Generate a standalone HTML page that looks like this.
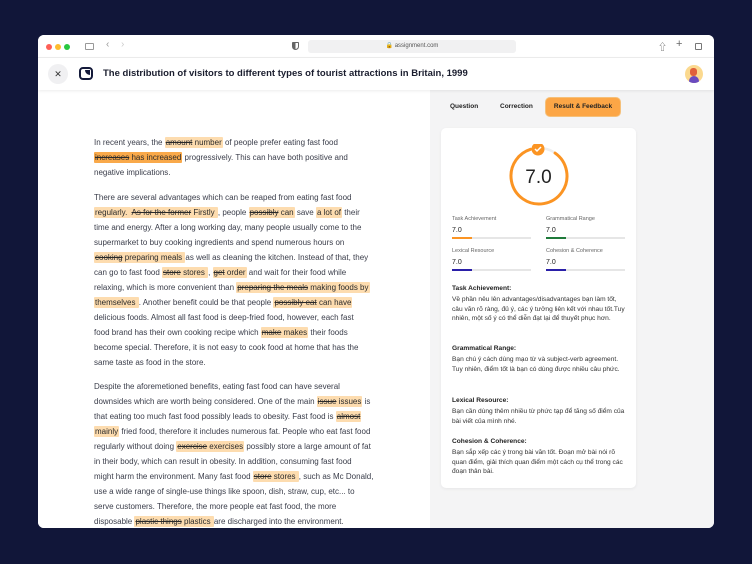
<!DOCTYPE html>
<html><head><meta charset="utf-8"><style>
*{margin:0;padding:0;box-sizing:border-box}
body{width:752px;height:564px;background:#111639;font-family:"Liberation Sans","Noto Sans CJK SC",sans-serif;position:relative;overflow:hidden;color:#2a2d3a}
.win{position:absolute;left:38px;top:35px;width:676px;height:493px;background:#fff;border-radius:6px;overflow:hidden}
.tb{position:absolute;left:0;top:0;width:676px;height:23px;background:#fff;border-bottom:1px solid #eee}
.dot{position:absolute;top:9px;width:6px;height:6px;border-radius:50%}
.hdr{position:absolute;left:0;top:23px;width:676px;height:32px;background:#fff;box-shadow:0 1px 3px rgba(0,0,0,.08);z-index:2}
.left{position:absolute;left:0;top:55px;width:392px;height:438px;background:#fff}
.right{position:absolute;left:392px;top:55px;width:284px;height:438px;background:#f4f4f5}
.ln{position:absolute;left:56px;white-space:nowrap;font-size:8px;color:#3a3d4a;line-height:12px}
.h{background:#fddcaf;padding:1px 1px;border-radius:1px;color:#2a2a2a}
.hd{background:#f9a94a}
s{text-decoration:line-through}
.card{position:absolute;left:11px;top:38px;width:195px;height:360px;background:#fff;border-radius:5px;box-shadow:0 1px 3px rgba(0,0,0,.06)}
.lab{position:absolute;font-size:5.5px;color:#666}
.val{position:absolute;font-size:7px;color:#222}
.bar{position:absolute;width:79px;height:2px;background:#e6e6e6}
.bar i{display:block;height:2px;width:20px}
.fb{position:absolute;left:11px;width:176px;font-size:6.6px;line-height:9.8px;color:#333}
.fb b{display:block;color:#222;margin-bottom:1px}
</style></head><body>
<div class="win">
 <div class="tb">
  <div class="dot" style="left:8px;background:#fe5f57"></div>
  <div class="dot" style="left:17px;background:#febc2e"></div>
  <div class="dot" style="left:26px;background:#28c840"></div>
  <div style="position:absolute;left:47px;top:8px;width:9px;height:7px;border:1px solid #999;border-radius:1px"></div>
  <div style="position:absolute;left:68px;top:4px;font-size:10px;color:#999">&#8249;</div>
  <div style="position:absolute;left:83px;top:4px;font-size:10px;color:#ccc">&#8250;</div>
  <div style="position:absolute;left:254px;top:7px;width:7px;height:8px;border:1px solid #666;border-radius:1px 1px 4px 4px;background:linear-gradient(90deg,#666 50%,#fff 50%)"></div>
  <div style="position:absolute;left:270px;top:5px;width:208px;height:13px;background:#f1f1f2;border-radius:3px;font-size:6px;color:#555;text-align:center;line-height:13px">&#128274; assignment.com</div>
  <div style="position:absolute;left:620px;top:5px;font-size:9px;color:#666">&#8679;</div>
  <div style="position:absolute;left:638px;top:3px;font-size:11px;color:#666">+</div>
  <div style="position:absolute;left:657px;top:8px;width:7px;height:7px;border:1px solid #777;border-radius:1px"></div>
 </div>
 <div class="hdr">
  <div style="position:absolute;left:10px;top:6px;width:20px;height:20px;border-radius:50%;background:#f0f0f2;text-align:center;line-height:20px;font-size:9px;color:#333">&#x2715;</div>
  <div style="position:absolute;left:41px;top:9px;width:14px;height:13px;border:2.5px solid #141a3a;border-radius:4px"></div>
  <div style="position:absolute;left:47px;top:12px;width:5px;height:5px;background:#141a3a;border-radius:0 0 0 5px"></div>
  <div style="position:absolute;left:65px;top:10px;font-size:9.5px;font-weight:bold;color:#1a1d2e">The distribution of visitors to different types of tourist attractions in Britain, 1999</div>
  <div style="position:absolute;left:647px;top:7px;width:18px;height:18px;border-radius:50%;background:#fbd98f;overflow:hidden"><div style="position:absolute;left:4px;top:11px;width:10px;height:8px;border-radius:5px 5px 0 0;background:#6a4bbf"></div><div style="position:absolute;left:5px;top:3px;width:7px;height:8px;border-radius:3px;background:#e0603a"></div></div>
 </div>
 <div class="left">
  <div class="ln" style="top:47px">In recent years, the <span class="h"><s>amount</s> number</span> of people prefer eating fast food</div>
  <div class="ln" style="top:62px"><span class="h hd"><s>increases</s> has increased</span> progressively. This can have both positive and</div>
  <div class="ln" style="top:77px">negative implications.</div>
  <div class="ln" style="top:102px">There are several advantages which can be reaped from eating fast food</div>
  <div class="ln" style="top:117px"><span class="h">regularly. </span> <span class="h"><s>As for the former</s> Firstly </span> , people <span class="h"><s>possibly</s> can</span> save <span class="h">a lot of</span> their</div>
  <div class="ln" style="top:132px">time and energy. After a long working day, many people usually come to the</div>
  <div class="ln" style="top:147px">supermarket to buy cooking ingredients and spend numerous hours on</div>
  <div class="ln" style="top:162px"><span class="h"><s>cooking</s> preparing meals </span> as well as cleaning the kitchen. Instead of that, they</div>
  <div class="ln" style="top:177px">can go to fast food <span class="h"><s>store</s> stores </span>, <span class="h"><s>get</s> order</span> and wait for their food while</div>
  <div class="ln" style="top:192px">relaxing, which is more convenient than <span class="h"><s>preparing the meals</s> making foods by</span></div>
  <div class="ln" style="top:207px"><span class="h">themselves </span> . Another benefit could be that people <span class="h"><s>possibly eat</s> can have</span></div>
  <div class="ln" style="top:222px">delicious foods. Almost all fast food is deep-fried food, however, each fast</div>
  <div class="ln" style="top:237px">food brand has their own cooking recipe which <span class="h"><s>make</s> makes</span> their foods</div>
  <div class="ln" style="top:252px">become special. Therefore, it is not easy to cook food at home that has the</div>
  <div class="ln" style="top:267px">same taste as food in the store.</div>
  <div class="ln" style="top:291px">Despite the aforemetioned benefits, eating fast food can have several</div>
  <div class="ln" style="top:306px">downsides which are worth being considered. One of the main <span class="h"><s>issue</s> issues</span> is</div>
  <div class="ln" style="top:321px">that eating too much fast food possibly leads to obesity. Fast food is <span class="h"><s>almost</s></span></div>
  <div class="ln" style="top:336px"><span class="h">mainly</span> fried food, therefore it includes numerous fat. People who eat fast food</div>
  <div class="ln" style="top:351px">regularly without doing <span class="h"><s>exercise</s> exercises</span> possibly store a large amount of fat</div>
  <div class="ln" style="top:366px">in their body, which can result in obesity. In addition, consuming fast food</div>
  <div class="ln" style="top:381px">might harm the environment. Many fast food <span class="h"><s>store</s> stores </span> , such as Mc Donald,</div>
  <div class="ln" style="top:396px">use a wide range of single-use things like spoon, dish, straw, cup, etc... to</div>
  <div class="ln" style="top:411px">serve customers. Therefore, the more people eat fast food, the more</div>
  <div class="ln" style="top:426px">disposable <span class="h"><s>plastic things</s> plastics </span> are discharged into the environment.</div>
 </div>
 <div class="right">
  <div style="position:absolute;left:20px;top:13px;font-size:6.5px;font-weight:bold;color:#222">Question</div>
  <div style="position:absolute;left:70px;top:13px;font-size:6.5px;font-weight:bold;color:#222">Correction</div>
  <div style="position:absolute;left:115px;top:7px;width:76px;height:20px;background:#fca646;border:1px solid #f5c07a;border-radius:5px;font-size:6.5px;font-weight:bold;color:#222;text-align:center;line-height:18px">Result &amp; Feedback</div>
  <div class="card">
   <svg style="position:absolute;left:67px;top:16px" width="62" height="62" viewBox="0 0 62 62">
    <circle cx="31" cy="32" r="28" fill="none" stroke="#eee" stroke-width="2.5"/>
    <circle cx="31" cy="32" r="28" fill="none" stroke="#fb9423" stroke-width="3" stroke-dasharray="150 176" transform="rotate(-90 31 32) rotate(35 31 32)" stroke-linecap="round"/>
    <circle cx="30" cy="5" r="6.5" fill="#fb9423"/>
    <path d="M27 5 l2 2 l4 -4" stroke="#fff" stroke-width="1.5" fill="none"/>
   </svg>
   <div style="position:absolute;left:0;width:195px;top:39px;text-align:center;font-size:19px;color:#222">7.0</div>
   <div class="lab" style="left:11px;top:88px">Task Achievement</div>
   <div class="val" style="left:11px;top:99px">7.0</div>
   <div class="bar" style="left:11px;top:109px"><i style="background:#fb9423"></i></div>
   <div class="lab" style="left:105px;top:88px">Grammatical Range</div>
   <div class="val" style="left:105px;top:99px">7.0</div>
   <div class="bar" style="left:105px;top:109px"><i style="background:#1f7a3a"></i></div>
   <div class="lab" style="left:11px;top:120px">Lexical Resource</div>
   <div class="val" style="left:11px;top:131px">7.0</div>
   <div class="bar" style="left:11px;top:141px"><i style="background:#2a1fa8"></i></div>
   <div class="lab" style="left:105px;top:120px">Cohesion &amp; Coherence</div>
   <div class="val" style="left:105px;top:131px">7.0</div>
   <div class="bar" style="left:105px;top:141px"><i style="background:#2a1fa8"></i></div>
   <div class="fb" style="top:156px"><b>Task Achievement:</b>Về phần nêu lên advantages/disadvantages bạn làm tốt, câu văn rõ ràng, đủ ý, các ý tưởng liên kết với nhau tốt.Tuy nhiên, một số ý có thể diễn đạt lại để thuyết phục hơn.</div>
   <div class="fb" style="top:216px"><b>Grammatical Range:</b>Bạn chú ý cách dùng mạo từ và subject-verb agreement. Tuy nhiên, điểm tốt là bạn có dùng được nhiều câu phức.</div>
   <div class="fb" style="top:268px"><b>Lexical Resource:</b>Bạn cần dùng thêm nhiều từ phức tạp để tăng số điểm của bài viết của mình nhé.</div>
   <div class="fb" style="top:309px"><b>Cohesion &amp; Coherence:</b>Bạn sắp xếp các ý trong bài văn tốt. Đoạn mở bài nói rõ quan điểm, giải thích quan điểm một cách cụ thể trong các đoạn thân bài.</div>
  </div>
 </div>
</div>
</body></html>
